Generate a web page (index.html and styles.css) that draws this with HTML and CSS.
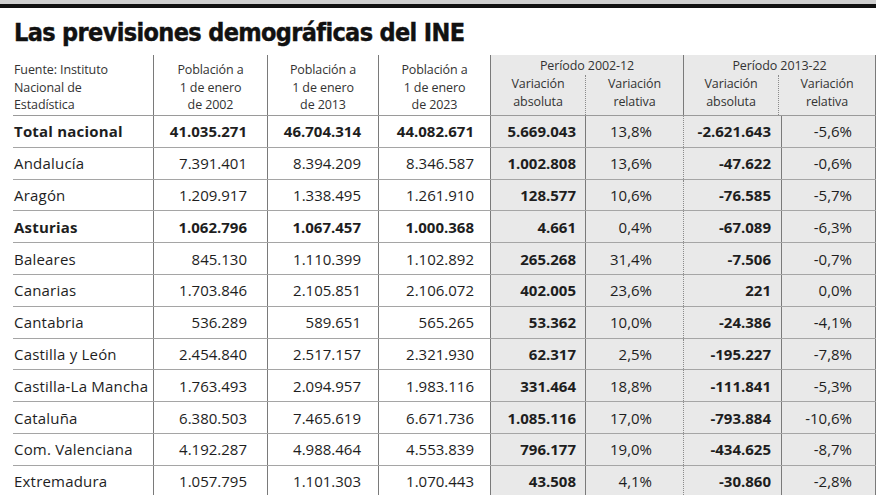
FILE: index.html
```html
<!DOCTYPE html>
<html lang="es">
<head>
<meta charset="utf-8">
<title>Las previsiones demográficas del INE</title>
<link rel="stylesheet" href="styles.css">
</head>
<body>
<div class="topbar"></div>
<h1 class="title">Las previsiones demográficas del INE</h1>
<div class="table">
  <div class="head">
    <div class="hc src">Fuente: Instituto<br>Nacional de<br>Estadística</div>
    <div class="hc pop">Población a<br>1 de enero<br>de 2002</div>
    <div class="hc pop">Población a<br>1 de enero<br>de 2013</div>
    <div class="hc pop">Población a<br>1 de enero<br>de 2023</div>
    <div class="hc period">
      <div class="ptitle">Período 2002-12</div>
      <div class="psub"><div class="sa">Variación<br>absoluta</div><div class="sr">Variación<br>relativa</div></div>
    </div>
    <div class="hc period">
      <div class="ptitle">Período 2013-22</div>
      <div class="psub"><div class="sa">Variación<br>absoluta</div><div class="sr">Variación<br>relativa</div></div>
    </div>
  </div>
  <div class="row bold"><div class="c name">Total nacional</div><div class="c p1">41.035.271</div><div class="c p2">46.704.314</div><div class="c p3">44.082.671</div><div class="c g a1">5.669.043</div><div class="c g r1">13,8%</div><div class="c g a2">-2.621.643</div><div class="c g r2">-5,6%</div></div>
  <div class="row"><div class="c name">Andalucía</div><div class="c p1">7.391.401</div><div class="c p2">8.394.209</div><div class="c p3">8.346.587</div><div class="c g a1">1.002.808</div><div class="c g r1">13,6%</div><div class="c g a2">-47.622</div><div class="c g r2">-0,6%</div></div>
  <div class="row"><div class="c name">Aragón</div><div class="c p1">1.209.917</div><div class="c p2">1.338.495</div><div class="c p3">1.261.910</div><div class="c g a1">128.577</div><div class="c g r1">10,6%</div><div class="c g a2">-76.585</div><div class="c g r2">-5,7%</div></div>
  <div class="row bold"><div class="c name">Asturias</div><div class="c p1">1.062.796</div><div class="c p2">1.067.457</div><div class="c p3">1.000.368</div><div class="c g a1">4.661</div><div class="c g r1">0,4%</div><div class="c g a2">-67.089</div><div class="c g r2">-6,3%</div></div>
  <div class="row"><div class="c name">Baleares</div><div class="c p1">845.130</div><div class="c p2">1.110.399</div><div class="c p3">1.102.892</div><div class="c g a1">265.268</div><div class="c g r1">31,4%</div><div class="c g a2">-7.506</div><div class="c g r2">-0,7%</div></div>
  <div class="row"><div class="c name">Canarias</div><div class="c p1">1.703.846</div><div class="c p2">2.105.851</div><div class="c p3">2.106.072</div><div class="c g a1">402.005</div><div class="c g r1">23,6%</div><div class="c g a2">221</div><div class="c g r2">0,0%</div></div>
  <div class="row"><div class="c name">Cantabria</div><div class="c p1">536.289</div><div class="c p2">589.651</div><div class="c p3">565.265</div><div class="c g a1">53.362</div><div class="c g r1">10,0%</div><div class="c g a2">-24.386</div><div class="c g r2">-4,1%</div></div>
  <div class="row"><div class="c name">Castilla y León</div><div class="c p1">2.454.840</div><div class="c p2">2.517.157</div><div class="c p3">2.321.930</div><div class="c g a1">62.317</div><div class="c g r1">2,5%</div><div class="c g a2">-195.227</div><div class="c g r2">-7,8%</div></div>
  <div class="row"><div class="c name">Castilla-La Mancha</div><div class="c p1">1.763.493</div><div class="c p2">2.094.957</div><div class="c p3">1.983.116</div><div class="c g a1">331.464</div><div class="c g r1">18,8%</div><div class="c g a2">-111.841</div><div class="c g r2">-5,3%</div></div>
  <div class="row"><div class="c name">Cataluña</div><div class="c p1">6.380.503</div><div class="c p2">7.465.619</div><div class="c p3">6.671.736</div><div class="c g a1">1.085.116</div><div class="c g r1">17,0%</div><div class="c g a2">-793.884</div><div class="c g r2">-10,6%</div></div>
  <div class="row"><div class="c name">Com. Valenciana</div><div class="c p1">4.192.287</div><div class="c p2">4.988.464</div><div class="c p3">4.553.839</div><div class="c g a1">796.177</div><div class="c g r1">19,0%</div><div class="c g a2">-434.625</div><div class="c g r2">-8,7%</div></div>
  <div class="row"><div class="c name">Extremadura</div><div class="c p1">1.057.795</div><div class="c p2">1.101.303</div><div class="c p3">1.070.443</div><div class="c g a1">43.508</div><div class="c g r1">4,1%</div><div class="c g a2">-30.860</div><div class="c g r2">-2,8%</div></div>
</div>
</body>
</html>
```
FILE: styles.css
```css
html, body {
  margin: 0;
  padding: 0;
  background: #fff;
}
body {
  width: 880px;
  height: 495px;
  overflow: hidden;
  font-family: "Open Sans", "Liberation Sans", sans-serif;
  color: #1e1e1e;
}
.topbar {
  width: 876px;
  height: 4px;
  background: #cfcfcf;
  border-bottom: 4px solid #111;
}
.title {
  margin: 0;
  padding: 10px 0 0 14px;
  height: 37px;
  font-family: "DejaVu Sans", sans-serif;
  font-stretch: condensed;
  font-weight: 700;
  font-size: 25px;
  line-height: 30px;
  letter-spacing: -0.65px;
  color: #111;
  -webkit-text-stroke: 0.4px #111;
}
.table {
  margin-left: 13px;
  width: 863px;
}
.head,
.row {
  display: grid;
  grid-template-columns: 141px 114px 111px 112px 95px 98px 98px 94px;
}
.head {
  height: 61px;
  border-bottom: 1px solid #9a9a9a;
  box-sizing: border-box;
  font-size: 12.5px;
  line-height: 17.5px;
  color: #333;
  letter-spacing: -0.1px;
}
.hc {
  border-right: 1px solid #7a7a7a;
  box-sizing: border-box;
}
.src {
  padding: 6px 0 0 1px;
  text-align: left;
}
.pop {
  padding-top: 6px;
  text-align: center;
}
.period {
  grid-column: span 2;
  background: #e9e9e9;
  display: flex;
  flex-direction: column;
}
.ptitle {
  text-align: center;
  padding-top: 2px;
  height: 18px;
  line-height: 18px;
}
.psub {
  flex: 1;
  display: grid;
  grid-template-columns: 95px 1fr;
}
.sa,
.sr {
  text-align: center;
  line-height: 18px;
}
.sa {
  border-right: 1px dotted #8a8a8a;
}
.row {
  height: 31.8px;
  box-sizing: border-box;
  border-bottom: 1px solid #a5a5a5;
  font-size: 15px;
  letter-spacing: 0;
}
.c {
  display: flex;
  align-items: center;
  justify-content: flex-end;
  border-right: 1px solid #7a7a7a;
  box-sizing: border-box;
  white-space: nowrap;
}
.c.name {
  justify-content: flex-start;
  padding-left: 1px;
  letter-spacing: 0.2px;
}
.g {
  background: #e9e9e9;
}
.p1 { padding-right: 20px; }
.p2 { padding-right: 17px; }
.p3 { padding-right: 16px; }
.a1 { padding-right: 9px; font-weight: 700; }
.r1 { padding-right: 31px; border-right: 1px dotted #8a8a8a; }
.a2 { padding-right: 10px; font-weight: 700; }
.r2 { padding-right: 23px; }
.row.bold .name,
.row.bold .p1,
.row.bold .p2,
.row.bold .p3 {
  font-weight: 700;
}
```
